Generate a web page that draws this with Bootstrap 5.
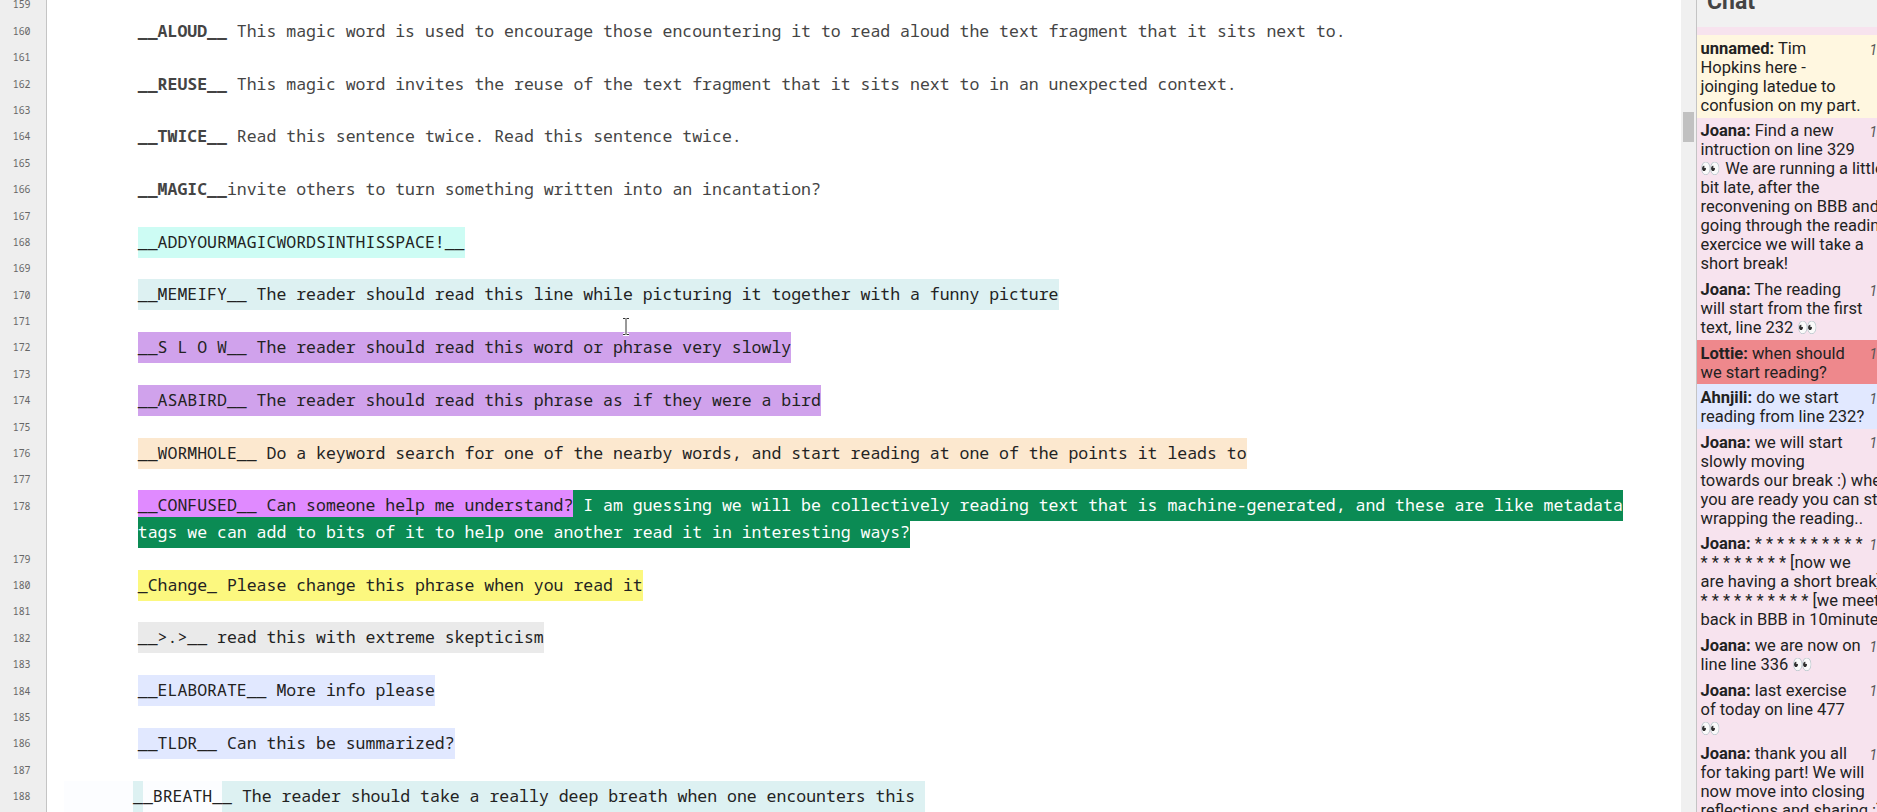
<!DOCTYPE html>
<html lang="en">
<head>
<meta charset="utf-8">
<title>Pad</title>
<link href="https://cdn.jsdelivr.net/npm/bootstrap@5.3.0/dist/css/bootstrap.min.css" rel="stylesheet">
<style>
body{font-family:Roboto,"Liberation Sans","Noto Color Emoji",sans-serif;color:#222;background:#fff}
.gutter{width:47px;background:#eee;border-right:1px solid #c4c4c4}
.pad-font{font-family:"Noto Sans Mono","DejaVu Sans Mono",monospace;font-size:16.5px;line-height:26.4px}
.rows{margin-top:-8.6px}
.ln{height:26.4px;white-space:pre}
.ln.tall{height:52.8px}
.gutter .ln{font-size:9.9px;color:#666;text-align:right;padding-right:15.5px}
.editor .ln{padding-left:90.8px;color:#444}
.editor .ln.wide{padding-left:16.7px}
.editor i{font-style:normal;color:#222;padding:3.4px 0 4.6px}
.mint{background:#cdfcf4}.aqua{background:#ddf1f2}.lilac{background:#d0a2ec}.peach{background:#fce8cf}
.violet{background:#e08aff}.editor i.green{background:#0b8b54;color:#fff}.lemon{background:#fcf87f}
.ash{background:#eaeaea}.sky{background:#e1e8ff}.frost{background:#fcfdff}
.track{width:15px;background:#f0f0f0;padding:112px 2px 0}
.thumb{height:30px;background:#c1c1c1}
.chat{width:181px;border-left:1px solid #c4c4c4;background:#f7e3ee}
.chat-head{height:27px;background:#f1f1f1;padding-left:10px}
.chat-head h1{font-size:23px;line-height:27px;margin-top:-12px;color:#444;font-weight:700}
.msg{padding:3.8px 0 2.8px 3.5px;font-size:16.5px;line-height:19px;white-space:pre}
.msg time{left:172.5px;top:5.5px;font-size:14px;font-style:italic;color:#555}
.cream{background:#fff7e0}.red{background:#ee888c}
.caret{left:622px;top:317px}
</style>
</head>
<body class="overflow-hidden">
<main class="d-flex vh-100 overflow-hidden position-relative">
<div class="gutter flex-shrink-0 pad-font"><div class="rows" id="nums"></div></div>
<div class="editor flex-grow-1 pad-font"><div class="rows"><div class="ln"></div><div class="ln"><b>__ALOUD__</b> This magic word is used to encourage those encountering it to read aloud the text fragment that it sits next to.</div><div class="ln"></div><div class="ln"><b>__REUSE__</b> This magic word invites the reuse of the text fragment that it sits next to in an unexpected context.</div><div class="ln"></div><div class="ln"><b>__TWICE__</b> Read this sentence twice. Read this sentence twice.</div><div class="ln"></div><div class="ln"><b>__MAGIC__</b>invite others to turn something written into an incantation?</div><div class="ln"></div><div class="ln"><i class="mint">__ADDYOURMAGICWORDSINTHISSPACE!__</i></div><div class="ln"></div><div class="ln"><i class="aqua">__MEMEIFY__ The reader should read this line while picturing it together with a funny picture</i></div><div class="ln"></div><div class="ln"><i class="lilac">__S L O W__ The reader should read this word or phrase very slowly</i></div><div class="ln"></div><div class="ln"><i class="lilac">__ASABIRD__ The reader should read this phrase as if they were a bird</i></div><div class="ln"></div><div class="ln"><i class="peach">__WORMHOLE__ Do a keyword search for one of the nearby words, and start reading at one of the points it leads to</i></div><div class="ln"></div><div class="ln tall"><i class="violet">__CONFUSED__ Can someone help me understand?</i><i class="green"> I am guessing we will be collectively reading text that is machine-generated, and these are like metadata
tags we can add to bits of it to help one another read it in interesting ways?</i></div><div class="ln"></div><div class="ln"><i class="lemon">_Change_ Please change this phrase when you read it</i></div><div class="ln"></div><div class="ln"><i class="ash">__&gt;.&gt;__ read this with extreme skepticism</i></div><div class="ln"></div><div class="ln"><i class="sky">__ELABORATE__ More info please</i></div><div class="ln"></div><div class="ln"><i class="sky">__TLDR__ Can this be summarized?</i></div><div class="ln"></div><div class="ln wide"><i class="frost">       </i><i class="aqua">_</i><i class="frost">_BREATH_</i><i class="aqua">_ The reader should take a really deep breath when one encounters this </i></div></div></div>
<div class="track flex-shrink-0"><div class="thumb"></div></div>
<aside class="chat flex-shrink-0 overflow-hidden">
<div class="chat-head mb-2"><div class="overflow-hidden h-100"><h1>Chat</h1></div></div>
<div class="msg position-relative cream"><time class="position-absolute">1</time><b>unnamed:</b> Tim
Hopkins here -
joinging latedue to
confusion on my part.</div>
<div class="msg position-relative"><time class="position-absolute">1</time><b>Joana:</b> Find a new
intruction on line 329
👀 We are running a little
bit late, after the
reconvening on BBB and
going through the reading
exercice we will take a
short break!</div>
<div class="msg position-relative"><time class="position-absolute">1</time><b>Joana:</b> The reading
will start from the first
text, line 232 👀</div>
<div class="msg position-relative red"><time class="position-absolute">1</time><b>Lottie:</b> when should
we start reading?</div>
<div class="msg position-relative sky"><time class="position-absolute">1</time><b>Ahnjili:</b> do we start
reading from line 232?</div>
<div class="msg position-relative"><time class="position-absolute">1</time><b>Joana:</b> we will start
slowly moving
towards our break :) when
you are ready you can start
wrapping the reading..</div>
<div class="msg position-relative"><time class="position-absolute">1</time><b>Joana:</b> * * * * * * * * * *
* * * * * * * * [now we
are having a short break]
* * * * * * * * * * [we meet
back in BBB in 10minutes</div>
<div class="msg position-relative"><time class="position-absolute">1</time><b>Joana:</b> we are now on
line line 336 👀</div>
<div class="msg position-relative"><time class="position-absolute">1</time><b>Joana:</b> last exercise
of today on line 477
👀</div>
<div class="msg position-relative"><time class="position-absolute">1</time><b>Joana:</b> thank you all
for taking part! We will
now move into closing
reflections and sharing :)</div>
</aside>
<svg class="caret position-absolute" width="8" height="20"><path d="M1 1.500h6M1 17.500h6M4 1v17" stroke="#fff" stroke-width="3" fill="none"/><path d="M1 1.500h2.500M4.500 1.500H7M1 17.500h2.500M4.500 17.500H7M4 2v15" stroke="#333" fill="none"/></svg>
</main>
<script>
const nums=document.getElementById('nums');
for(let n=159;n<=188;n++){const d=document.createElement('div');d.className='ln'+(n===178?' tall':'');d.textContent=n;nums.append(d);}
</script>
<script src="https://cdn.jsdelivr.net/npm/bootstrap@5.3.0/dist/js/bootstrap.bundle.min.js"></script>
</body>
</html>
